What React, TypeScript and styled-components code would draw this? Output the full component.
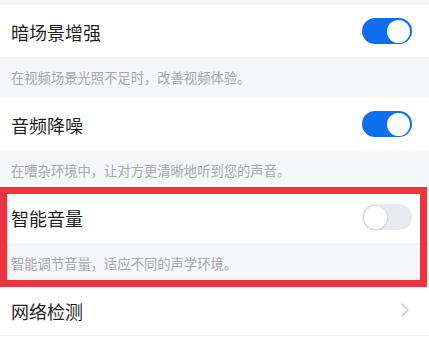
import { createGlobalStyle, styled } from 'styled-components';

const GlobalStyle = createGlobalStyle`
  html, body {
    margin: 0;
    padding: 0;
    background: #ffffff;
  }
  body {
    font-family: "Noto Sans CJK SC", "Noto Sans", sans-serif;
  }
`;

const Page = styled.div`
  width: 429px;
  display: flex;
  flex-direction: column;
  background: #ffffff;
`;

const TopGap = styled.div`
  height: 5px;
  background: #f5f6f8;
`;

const Group = styled.div`
  position: relative;
  display: flex;
  flex-direction: column;
`;

const Row = styled.div<{ $divider?: boolean }>`
  height: 52px;
  display: flex;
  align-items: center;
  justify-content: space-between;
  padding: 0 17px 0 11px;
  background: #ffffff;
  box-sizing: border-box;
  border-bottom: ${({ $divider }) => ($divider ? '1px solid #eeeff1' : 'none')};
`;

const Title = styled.span`
  font-size: 18px;
  line-height: 1;
  color: #1f1f1f;
  padding-top: 2px;
`;

const Desc = styled.div`
  height: 41px;
  display: flex;
  align-items: center;
  padding: 0 11px;
  background: #f5f6f8;
  font-size: 13.3px;
  color: #a6a8ab;
`;

const Track = styled.div<{ $on: boolean }>`
  width: 50px;
  height: 26px;
  border-radius: 13px;
  background: ${({ $on }) => ($on ? '#0e6ef0' : '#e9eaed')};
  display: flex;
  align-items: center;
  justify-content: ${({ $on }) => ($on ? 'flex-end' : 'flex-start')};
  padding: 0 2px;
  box-sizing: border-box;
`;

const Knob = styled.div<{ $on: boolean }>`
  width: 23px;
  height: 23px;
  border-radius: 50%;
  background: #ffffff;
  box-shadow: ${({ $on }) => ($on ? 'none' : '0 0 0 1px #d6d7da, 0 1px 2px rgba(0,0,0,0.15)')};
`;

const Highlight = styled.div`
  position: absolute;
  top: -4px;
  bottom: -3px;
  left: 0;
  right: 2px;
  border: 7px solid #ee3340;
  pointer-events: none;
`;

const Chevron = styled.svg`
  width: 8px;
  height: 14px;
  margin-right: 3px;
`;

type Item = { title: string; desc: string; on: boolean; highlight?: boolean };

const items: Item[] = [
  { title: '暗场景增强', desc: '在视频场景光照不足时，改善视频体验。', on: true },
  { title: '音频降噪', desc: '在嘈杂环境中，让对方更清晰地听到您的声音。', on: true },
  { title: '智能音量', desc: '智能调节音量，适应不同的声学环境。', on: false, highlight: true },
];

const Switch: React.FC<{ on: boolean }> = ({ on }) => (
  <Track $on={on}>
    <Knob $on={on} />
  </Track>
);

export default function App() {
  return (
    <>
      <GlobalStyle />
      <Page>
        <TopGap />
        {items.map((item) => (
          <Group key={item.title}>
            <Row>
              <Title>{item.title}</Title>
              <Switch on={item.on} />
            </Row>
            <Desc>{item.desc}</Desc>
            {item.highlight && <Highlight />}
          </Group>
        ))}
        <Row $divider>
          <Title>网络检测</Title>
          <Chevron viewBox="0 0 8 14">
            <path d="M1 1l6 6-6 6" fill="none" stroke="#c5c6c9" strokeWidth="1.4" strokeLinecap="round" strokeLinejoin="round" />
          </Chevron>
        </Row>
      </Page>
    </>
  );
}
